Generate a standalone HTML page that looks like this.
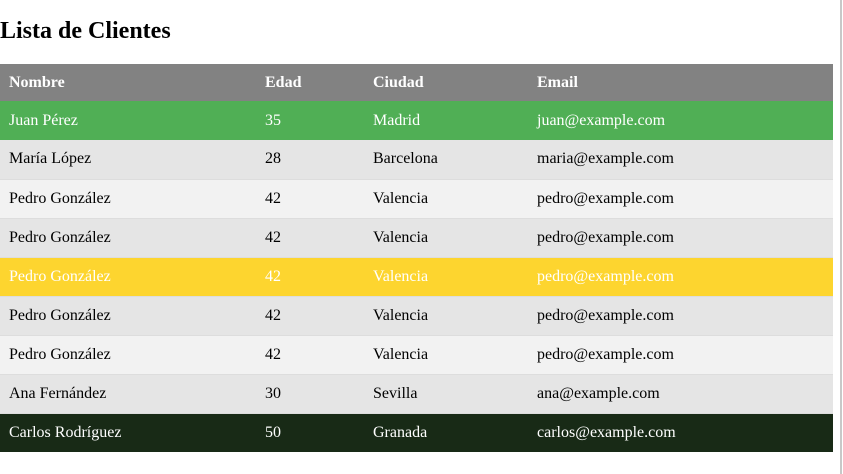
<!DOCTYPE html>
<html><head><style>
html,body{margin:0;padding:0;background:#fff;width:843px;height:474px;overflow:hidden;font-family:"Liberation Serif",serif;}
.vl{position:absolute;left:840px;top:0;width:2px;height:474px;background:#c8c8c8;}
h2{position:absolute;left:0;top:16px;margin:0;font-size:24px;font-weight:bold;line-height:30px;}
table{position:absolute;left:0;top:64px;width:833px;border-collapse:collapse;font-size:16px;}
td,th{padding:0 0 0 9px;text-align:left;height:39px;box-sizing:border-box;border-bottom:1px solid #ddd;}
th{background:#828282;color:#fff;font-weight:bold;height:37px;border:none;}
tr.g td{background:#50af55;color:#fff;border:none;}
tr.a td{background:#e5e5e5;}
tr.b td{background:#f2f2f2;}
tr.y td{background:#fdd52f;color:#fff;}
tr.d td{background:#182a16;color:#fff;border:none;}
</style></head><body>
<div class="vl"></div>
<h2>Lista de Clientes</h2>
<table>
<colgroup><col style="width:256px"><col style="width:108px"><col style="width:164px"><col></colgroup>
<tr><th>Nombre</th><th>Edad</th><th>Ciudad</th><th>Email</th></tr>
<tr class="g"><td>Juan Pérez</td><td>35</td><td>Madrid</td><td>juan@example.com</td></tr>
<tr class="a"><td>María López</td><td>28</td><td>Barcelona</td><td>maria@example.com</td></tr>
<tr class="b"><td>Pedro González</td><td>42</td><td>Valencia</td><td>pedro@example.com</td></tr>
<tr class="a"><td>Pedro González</td><td>42</td><td>Valencia</td><td>pedro@example.com</td></tr>
<tr class="y"><td>Pedro González</td><td>42</td><td>Valencia</td><td>pedro@example.com</td></tr>
<tr class="a"><td>Pedro González</td><td>42</td><td>Valencia</td><td>pedro@example.com</td></tr>
<tr class="b"><td>Pedro González</td><td>42</td><td>Valencia</td><td>pedro@example.com</td></tr>
<tr class="a"><td>Ana Fernández</td><td>30</td><td>Sevilla</td><td>ana@example.com</td></tr>
<tr class="d"><td>Carlos Rodríguez</td><td>50</td><td>Granada</td><td>carlos@example.com</td></tr>
</table>
</body></html>
